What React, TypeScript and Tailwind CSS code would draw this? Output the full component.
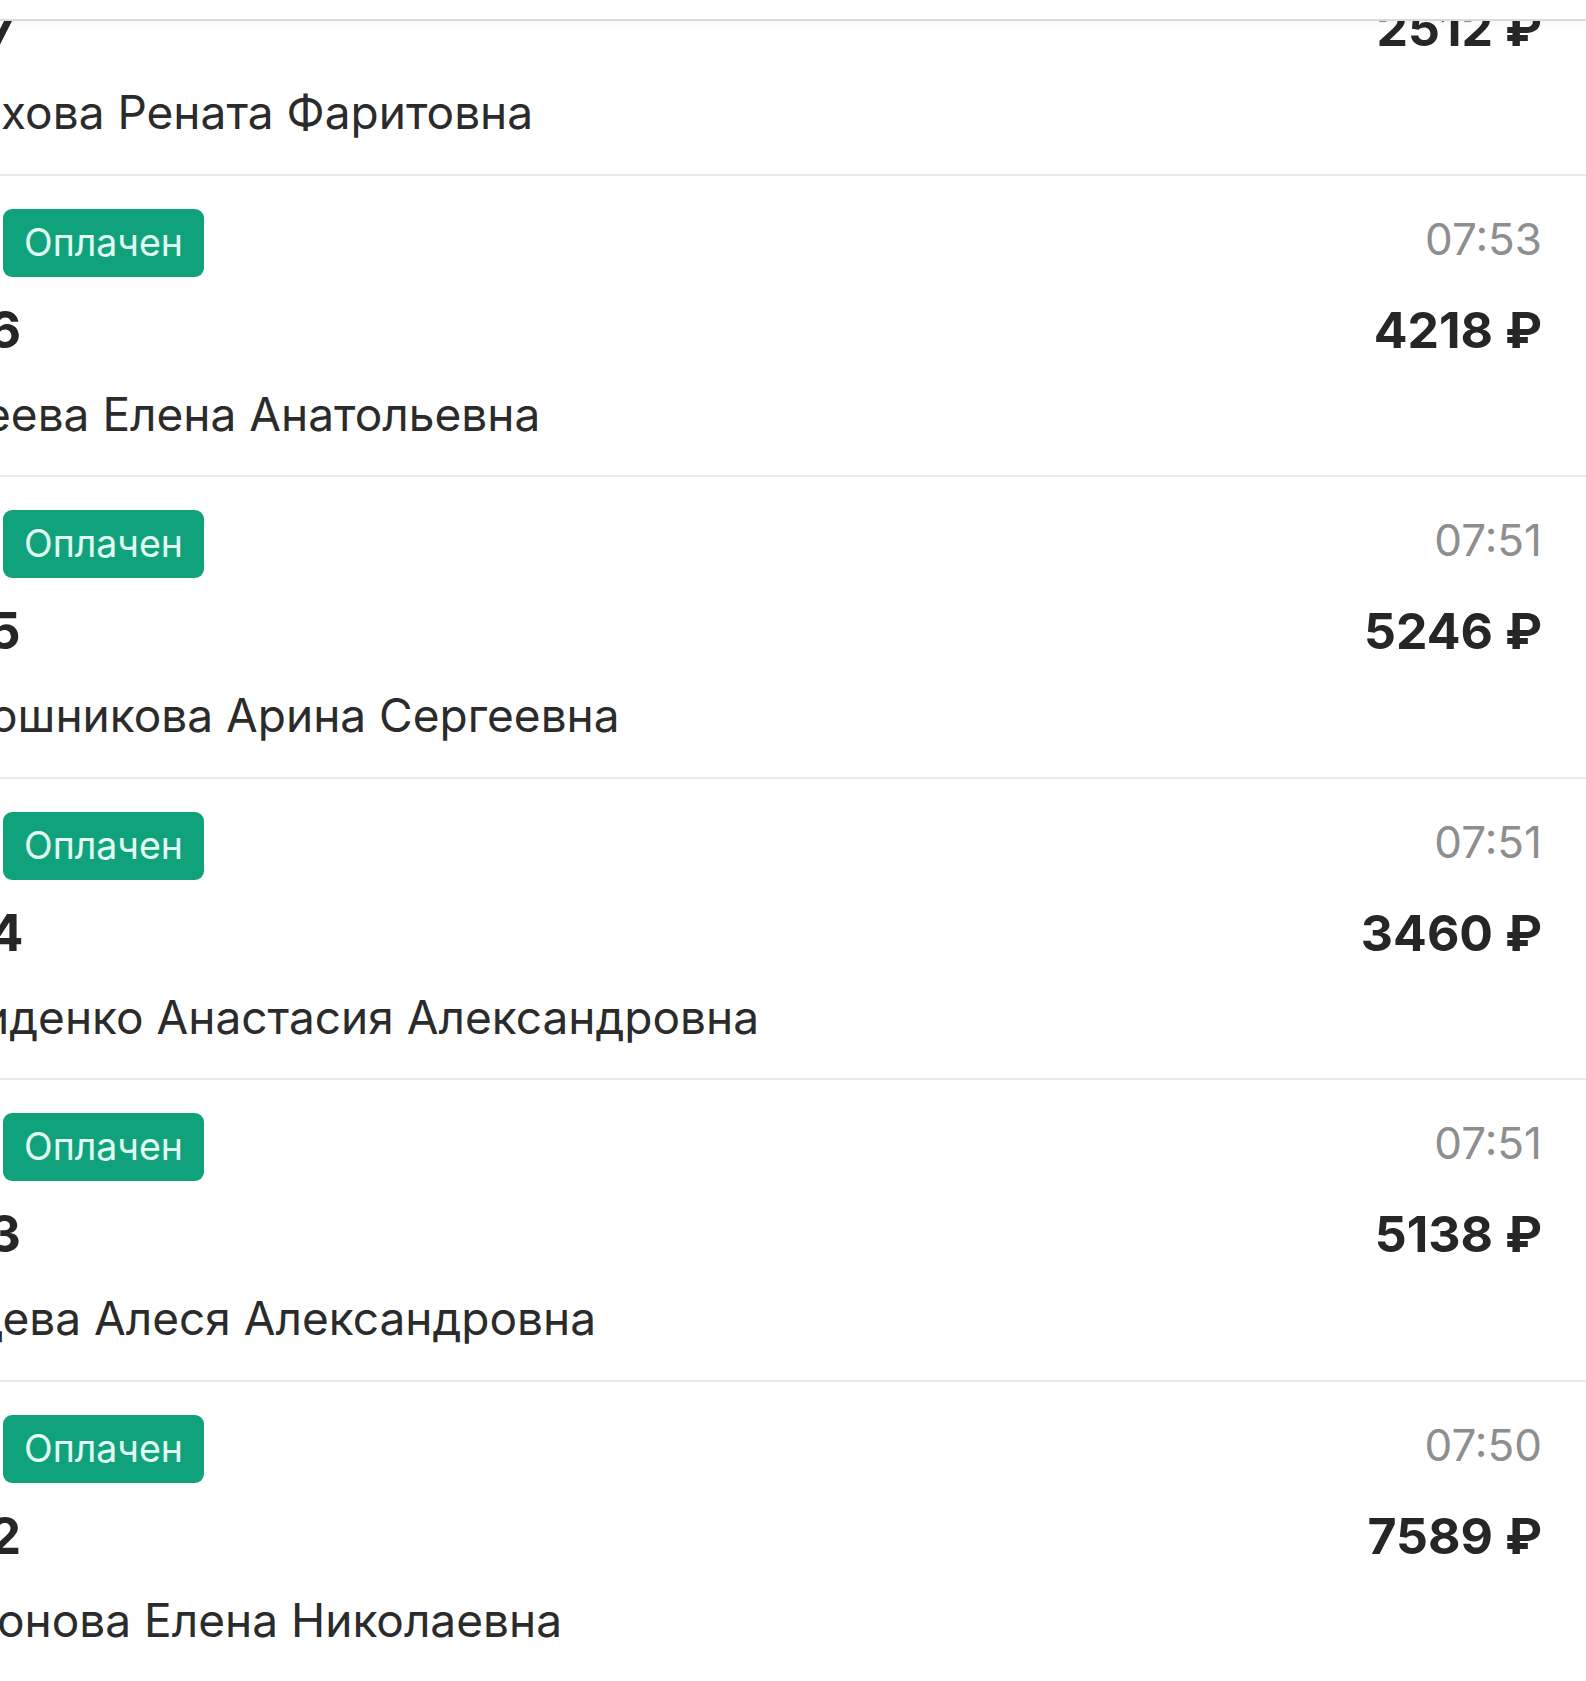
import React from 'react';

interface Order {
  num: string;
  time: string;
  amount: string;
  name: string;
  numShift: string;
  nameShift: string;
}

const orders: Order[] = [
  { num: '7', time: '07:54', amount: '2512 ₽', name: 'хова Рената Фаритовна', numShift: '-ml-[16px]', nameShift: '-ml-[2px]' },
  { num: '6', time: '07:53', amount: '4218 ₽', name: 'еева Елена Анатольевна', numShift: '-ml-[15px]', nameShift: '-ml-[19px]' },
  { num: '5', time: '07:51', amount: '5246 ₽', name: 'ошникова Арина Сергеевна', numShift: '-ml-[15px]', nameShift: '-ml-[13px]' },
  { num: '4', time: '07:51', amount: '3460 ₽', name: 'иденко Анастасия Александровна', numShift: '-ml-[14px]', nameShift: '-ml-[21px]' },
  { num: '3', time: '07:51', amount: '5138 ₽', name: 'цева Алеся Александровна', numShift: '-ml-[15px]', nameShift: '-ml-[28px]' },
  { num: '2', time: '07:50', amount: '7589 ₽', name: 'онова Елена Николаевна', numShift: '-ml-[14px]', nameShift: '-ml-[6px]' },
];

const OrderRow: React.FC<{ order: Order }> = ({ order }) => (
  <div className="h-[301.5px] shrink-0 border-b-2 border-[#e9e9e9] pt-[33px] pl-[3px] pr-[44px] overflow-hidden">
    <div className="flex h-[68px] justify-between">
      <div className="flex h-[68px] w-[201px] items-center justify-center rounded-[9px] bg-[#10a37b] text-[37.5px] leading-none text-[#e2fcf3]">
        Оплачен
      </div>
      <span className="text-[44px] leading-[60px] text-[#8e8e8e]">{order.time}</span>
    </div>
    <div className="mt-[23px] flex h-[60px] items-center justify-between">
      <span className={`${order.numShift} text-[51px] font-bold leading-[60px] text-[#262626]`}>{order.num}</span>
      <span className="text-[50px] font-bold leading-[60px] text-[#262626]">{order.amount}</span>
    </div>
    <div className="mt-[24px] flex h-[60px] items-center">
      <span className={`${order.nameShift} whitespace-nowrap text-[46px] leading-[60px] text-[#2b2b2b]`}>
        {order.name}
      </span>
    </div>
  </div>
);

export default function App() {
  return (
    <div className="flex h-[1681px] w-[1586px] flex-col overflow-hidden bg-white font-['Inter',sans-serif]">
      <div className="relative z-10 h-[21px] shrink-0 border-b-2 border-[#dadada] bg-white shadow-[0_2px_5px_rgba(0,0,0,0.05)]" />
      <div className="flex flex-1 flex-col overflow-hidden">
        <div className="-mt-[147px] flex flex-col">
          {orders.map((o) => (
            <OrderRow key={o.num} order={o} />
          ))}
        </div>
      </div>
    </div>
  );
}
